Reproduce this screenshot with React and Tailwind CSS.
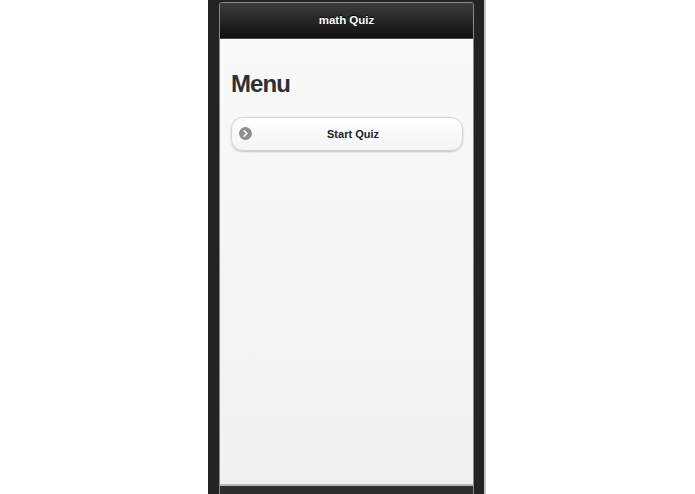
import React from "react";
import { ChevronRight } from "lucide-react";

const font = { fontFamily: '"Liberation Sans", Arial, sans-serif' };

const App = () => {
  return (
    <div className="h-[494px] w-[695px] overflow-hidden bg-white flex" style={font}>
      <div className="ml-[208px] h-[494px] w-[278px] bg-[#232323] border-r-2 border-[#c4c4c4] pl-[11px] pr-[10px] pt-[2px] flex flex-col">
        <div className="flex-1 flex flex-col border-x border-[#8a8a8a] rounded-t-[3px] overflow-hidden">
          {/* Header */}
          <div className="h-[37px] shrink-0 border-t border-b border-t-[#8c8c8c] border-b-[#4a4a4a] bg-gradient-to-b from-[#3c3c3c] to-[#111111] flex items-center justify-center">
            <h1 className="text-[11.5px] font-bold text-white [text-shadow:0_-1px_1px_#000]">math Quiz</h1>
          </div>

          {/* Content */}
          <div className="flex-1 bg-gradient-to-b from-[#f9f9f9] to-[#f0f0f0] px-[11px] pt-[29px]">
            <h2 className="text-[24px] leading-[32px] font-bold text-[#2f3033] tracking-[-0.9px]">Menu</h2>
            <button className="mt-[17px] w-[232px] h-[34px] relative rounded-[12px] border border-[#d6d6d6] bg-gradient-to-b from-white to-[#f4f4f4] shadow-[0_1px_2px_rgba(0,0,0,0.22)] flex items-center justify-center">
              <span className="absolute left-[7px] top-[9px] w-[13px] h-[13px] rounded-full bg-[#8f8f8f] flex items-center justify-center">
                <ChevronRight size={11} strokeWidth={3.5} className="text-white" />
              </span>
              <span className="pl-[12px] text-[11px] font-bold text-[#222222]">Start Quiz</span>
            </button>
          </div>

          {/* Footer */}
          <div className="h-[10px] shrink-0 border-t-2 border-[#b9b9b9] bg-[#2e2e2e]" />
        </div>
      </div>
    </div>
  );
};

export default App;
